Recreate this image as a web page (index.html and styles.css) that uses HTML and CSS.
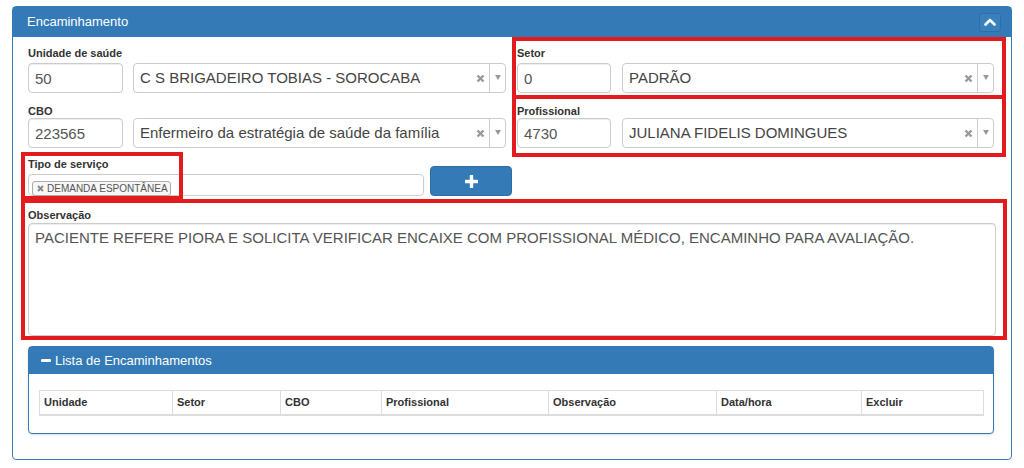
FILE: index.html
```html
<!DOCTYPE html>
<html lang="pt-BR">
<head>
<meta charset="utf-8">
<title>Encaminhamento</title>
<link rel="stylesheet" href="styles.css">
</head>
<body>
<div class="panel">
  <div class="panel-heading">
    <span class="panel-title">Encaminhamento</span>
    <button class="collapse-btn" type="button" aria-label="Recolher">
      <svg width="12" height="8" viewBox="0 0 12 8"><polyline points="1.5,6.5 6,2 10.5,6.5" fill="none" stroke="#fff" stroke-width="2.6" stroke-linecap="round" stroke-linejoin="round"/></svg>
    </button>
  </div>
  <div class="panel-body">
    <div class="grid-row">
      <div class="field">
        <label class="lbl">Unidade de saúde</label>
        <div class="pair">
          <div class="input code">50</div>
          <div class="select"><span class="sel-text">C S BRIGADEIRO TOBIAS - SOROCABA</span><span class="sel-clear"><svg width="9" height="9" viewBox="0 0 9 9"><path d="M1.5 1.5 L7.5 7.5 M7.5 1.5 L1.5 7.5" stroke="#999" stroke-width="2.4"/></svg></span><span class="sel-arrow"><i></i></span></div>
        </div>
      </div>
      <div class="field">
        <label class="lbl">Setor</label>
        <div class="pair">
          <div class="input code">0</div>
          <div class="select"><span class="sel-text">PADRÃO</span><span class="sel-clear"><svg width="9" height="9" viewBox="0 0 9 9"><path d="M1.5 1.5 L7.5 7.5 M7.5 1.5 L1.5 7.5" stroke="#999" stroke-width="2.4"/></svg></span><span class="sel-arrow"><i></i></span></div>
        </div>
      </div>
    </div>
    <div class="grid-row second">
      <div class="field">
        <label class="lbl tight">CBO</label>
        <div class="pair">
          <div class="input code">223565</div>
          <div class="select"><span class="sel-text">Enfermeiro da estratégia de saúde da família</span><span class="sel-clear"><svg width="9" height="9" viewBox="0 0 9 9"><path d="M1.5 1.5 L7.5 7.5 M7.5 1.5 L1.5 7.5" stroke="#999" stroke-width="2.4"/></svg></span><span class="sel-arrow"><i></i></span></div>
        </div>
      </div>
      <div class="field">
        <label class="lbl tight">Profissional</label>
        <div class="pair">
          <div class="input code">4730</div>
          <div class="select"><span class="sel-text">JULIANA FIDELIS DOMINGUES</span><span class="sel-clear"><svg width="9" height="9" viewBox="0 0 9 9"><path d="M1.5 1.5 L7.5 7.5 M7.5 1.5 L1.5 7.5" stroke="#999" stroke-width="2.4"/></svg></span><span class="sel-arrow"><i></i></span></div>
        </div>
      </div>
    </div>
    <div class="tipo-row">
      <div class="field tipo">
        <label class="lbl">Tipo de serviço</label>
        <div class="multi"><span class="tag"><svg class="tag-x" width="7" height="7" viewBox="0 0 7 7"><path d="M1 1 L6 6 M6 1 L1 6" stroke="#888" stroke-width="1.9"/></svg>DEMANDA ESPONTÂNEA</span></div>
      </div>
      <button class="btn-add" type="button" aria-label="Adicionar">
        <svg width="13" height="13" viewBox="0 0 13 13"><path d="M6.5 1 V12 M1 6.5 H12" stroke="#fff" stroke-width="3.4" stroke-linecap="round"/></svg>
      </button>
    </div>
    <div class="field obs">
      <label class="lbl obs-lbl">Observação</label>
      <div class="textarea">PACIENTE REFERE PIORA E SOLICITA VERIFICAR ENCAIXE COM PROFISSIONAL MÉDICO, ENCAMINHO PARA AVALIAÇÃO.</div>
    </div>
    <div class="sub-panel">
      <div class="sub-heading"><span class="minus"></span>Lista de Encaminhamentos</div>
      <div class="sub-body">
        <table class="tbl">
          <thead>
            <tr>
              <th class="c1">Unidade</th>
              <th class="c2">Setor</th>
              <th class="c3">CBO</th>
              <th class="c4">Profissional</th>
              <th class="c5">Observação</th>
              <th class="c6">Data/hora</th>
              <th class="c7">Excluir</th>
            </tr>
          </thead>
        </table>
      </div>
    </div>
  </div>
</div>
<div class="mark mark-setor"></div>
<div class="mark mark-prof"></div>
<div class="mark mark-tipo"></div>
<div class="mark mark-obs"></div>
</body>
</html>
```
FILE: styles.css
```css
* { box-sizing: border-box; }
html, body { margin: 0; background: #fff; }
body {
  position: relative;
  padding: 6px 12px 0;
  font-family: "Liberation Sans", Arial, sans-serif;
  color: #333;
  width: 1024px;
  height: 468px;
  overflow: hidden;
}
.panel {
  border: 1px solid #337ab7;
  border-radius: 4px;
  width: 1000px;
}
.panel-heading {
  background: #337ab7;
  height: 30px;
  display: flex;
  align-items: center;
  justify-content: space-between;
  padding: 0 10px 0 14px;
  color: #fff;
  font-size: 13px;
}
.panel-title { line-height: 16px; margin-top: -1px; }
.collapse-btn {
  width: 22px;
  height: 19px;
  padding: 0;
  margin: 0;
  border: 1px solid #2f6ea5;
  border-radius: 3px;
  background: #3a80bd;
  display: flex;
  align-items: center;
  justify-content: center;
}
.panel-body { padding: 10px 15px 25px; }
.grid-row {
  display: grid;
  grid-template-columns: 478px 477px;
  column-gap: 11px;
}
.grid-row.second { margin-top: 12px; }
.lbl {
  display: block;
  font-size: 11px;
  font-weight: bold;
  line-height: 13px;
  margin-bottom: 3px;
  color: #333;
}
.lbl.tight { margin-bottom: 0; }
.pair { display: flex; gap: 10px; }
.grid-row > .field:nth-child(2) .pair { gap: 11px; }
.input {
  height: 30px;
  border: 1px solid #ccc;
  border-radius: 4px;
  box-shadow: inset 0 1px 1px rgba(0,0,0,.075);
  font-size: 15px;
  line-height: 28px;
  padding: 1px 6px 0;
  color: #555;
}
.code { width: 95px; flex: none; }
.grid-row > .field:nth-child(2) .code { width: 94px; }
.select {
  flex: 1;
  height: 30px;
  border: 1px solid #ccc;
  border-radius: 4px;
  display: flex;
  align-items: center;
  color: #444;
  font-size: 15px;
}
.sel-text { flex: 1; padding-left: 6px; margin-top: -1px; white-space: nowrap; overflow: hidden; }
.sel-clear {
  width: 14px;
  display: flex;
  align-items: center;
  justify-content: center;
  margin-right: 2px;
  margin-top: 1px;
}
.sel-arrow {
  width: 16px;
  height: 28px;
  border-left: 1px solid #ccc;
  display: flex;
  align-items: center;
  justify-content: center;
}
.sel-arrow i {
  width: 0;
  height: 0;
  border-left: 3.5px solid transparent;
  border-right: 3.5px solid transparent;
  border-top: 5px solid #999;
  margin-top: -1px;
}
.tipo-row {
  display: flex;
  align-items: flex-end;
  gap: 6px;
  margin-top: 10px;
}
.tipo { width: 396px; }
.multi {
  height: 22px;
  border: 1px solid #ccc;
  border-radius: 4px;
  padding: 3px 3px;
}
.tag {
  display: inline-flex;
  align-items: center;
  height: 15px;
  border: 1px solid #aaa;
  border-radius: 3px;
  background: #f7f7f7;
  padding: 0 2px 0 4px;
  font-size: 10px;
  color: #555;
  line-height: 13px;
  white-space: nowrap;
}
.tag-x { margin-right: 3px; }
.btn-add {
  width: 82px;
  height: 30px;
  border: 1px solid #2e6da4;
  border-radius: 4px;
  background: #337ab7;
  padding: 0;
  display: flex;
  align-items: center;
  justify-content: center;
}
.obs { margin-top: 13px; }
.obs-lbl { margin-bottom: 1px; }
.textarea {
  height: 113px;
  border: 1px solid #ccc;
  border-radius: 4px;
  box-shadow: inset 0 1px 1px rgba(0,0,0,.075);
  padding: 4px 6px;
  font-size: 15px;
  line-height: 20px;
  color: #555;
}
.sub-panel {
  margin-top: 10px;
  width: 966px;
  border: 1px solid #337ab7;
  border-radius: 4px;
  box-shadow: 0 1px 2px rgba(0,0,0,.15);
}
.sub-heading {
  background: #337ab7;
  height: 27px;
  color: #fff;
  font-size: 13px;
  display: flex;
  align-items: center;
  padding-left: 12px;
}
.minus {
  width: 10px;
  height: 3px;
  background: #fff;
  border-radius: 1px;
  margin-right: 4px;
}
.sub-body { padding: 16px 10px 17px; }
.tbl {
  width: 944px;
  border-collapse: collapse;
  table-layout: fixed;
}
.tbl th {
  text-align: left;
  font-size: 11px;
  font-weight: bold;
  color: #333;
  line-height: 14px;
  padding: 4px 4px 5px;
  border: 1px solid #ddd;
  border-bottom: 2px solid #ddd;
}
.c1 { width: 133px; }
.c2 { width: 108px; }
.c3 { width: 101px; }
.c4 { width: 167px; }
.c5 { width: 168px; }
.c6 { width: 145px; }
.c7 { width: 122px; }
.mark {
  position: absolute;
  border: 4px solid #e31b1f;
  pointer-events: none;
}
.mark-setor { left: 512px; top: 37px; width: 494px; height: 62px; }
.mark-prof { left: 512px; top: 95px; width: 494px; height: 62px; }
.mark-tipo { left: 21px; top: 152px; width: 162px; height: 48px; }
.mark-obs { left: 21px; top: 199px; width: 986px; height: 141px; }
```
